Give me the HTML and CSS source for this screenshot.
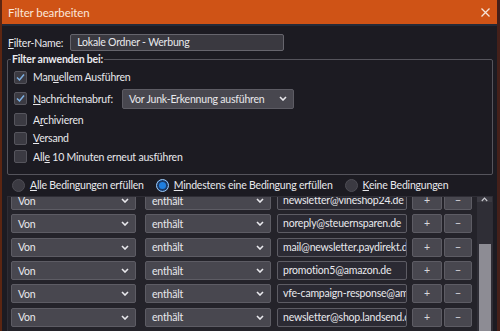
FILE: index.html
```html
<!DOCTYPE html>
<html lang="de">
<head>
  <meta charset="UTF-8">
  <title>Filter bearbeiten</title>
  <link rel="stylesheet" href="styles.css">
</head>
<body>
  <div class="window">
    <div class="titlebar">
      <span class="title">Filter bearbeiten</span>
      <svg class="close" width="9" height="9" viewBox="0 0 9 9"><path d="M0.5 0.5 L8.5 8.5 M8.5 0.5 L0.5 8.5" stroke="#f6e4d8" stroke-width="1.3"/></svg>
    </div>

    <div class="content">
      <div class="name-row">
        <label><u>F</u>ilter-Name:</label>
        <div class="name-input">Lokale Ordner - Werbung</div>
      </div>

      <fieldset class="apply">
        <legend>Filter anwenden bei:</legend>
        <div class="check-row">
          <span class="box checked"><svg width="11" height="11" viewBox="0 0 11 11"><path d="M2 5.5 L4.5 8 L9 2.5" fill="none" stroke="#7fb2e5" stroke-width="1.5"/></svg></span>
          <span>Man<u>u</u>ellem Ausführen</span>
        </div>
        <div class="check-row tall">
          <span class="box checked"><svg width="11" height="11" viewBox="0 0 11 11"><path d="M2 5.5 L4.5 8 L9 2.5" fill="none" stroke="#7fb2e5" stroke-width="1.5"/></svg></span>
          <span class="fetch-label"><u>N</u>achrichtenabruf:</span>
          <div class="select junk">
            <span>Vor Junk-Erkennung ausführen</span>
            <svg width="8" height="5" viewBox="0 0 8 5"><path d="M1 1 L4 4 L7 1" fill="none" stroke="#e8e8ec" stroke-width="1.6"/></svg>
          </div>
        </div>
        <div class="check-row">
          <span class="box"></span>
          <span>A<u>r</u>chivieren</span>
        </div>
        <div class="check-row">
          <span class="box"></span>
          <span><u>V</u>ersand</span>
        </div>
        <div class="check-row">
          <span class="box"></span>
          <span>All<u>e</u> 10 Minuten erneut ausführen</span>
        </div>
      </fieldset>

      <div class="radios">
        <div class="radio-item"><span class="radio"></span><span><u>A</u>lle Bedingungen erfüllen</span></div>
        <div class="radio-item"><span class="radio on"></span><span><u>M</u>indestens eine Bedingung erfüllen</span></div>
        <div class="radio-item"><span class="radio"></span><span><u>K</u>eine Bedingungen</span></div>
      </div>

      <div class="rules">
        <div class="rule-list" id="rule-list"></div>
        <div class="scrollbar">
          <div class="scroll-up"><svg width="7" height="5" viewBox="0 0 7 5"><path d="M0.8 4 L3.5 1.2 L6.2 4" fill="none" stroke="#c9c9cf" stroke-width="1.2"/></svg></div>
          <div class="scroll-track"><div class="thumb"></div></div>
        </div>
      </div>
    </div>
  </div>

  <script>
    var addresses = [
      'newsletter@vineshop24.de',
      'noreply@steuernsparen.de',
      'mail@newsletter.paydirekt.de',
      'promotion5@amazon.de',
      'vfe-campaign-response@amazon.de',
      'newsletter@shop.landsend.de',
      'info@newsletter.zalando.de'
    ];

    var chevron = '<svg width="8" height="5" viewBox="0 0 8 5"><path d="M1 1 L4 4 L7 1" fill="none" stroke="#e8e8ec" stroke-width="1.6"/></svg>';
    var list = document.getElementById('rule-list');

    addresses.forEach(function (addr) {
      var row = document.createElement('div');
      row.className = 'rule-row';
      row.innerHTML =
        '<div class="select field"><span>Von</span>' + chevron + '</div>' +
        '<div class="select op"><span>enthält</span>' + chevron + '</div>' +
        '<div class="value">' + addr + '</div>' +
        '<div class="btn plus">+</div>' +
        '<div class="btn minus">&minus;</div>';
      list.appendChild(row);
    });
  </script>
</body>
</html>
```

FILE: styles.css
```css
body {
  margin: 0;
  background-color: #1c1b22;
  color: #e9e9ed;
  font-family: 'Lato', 'Liberation Sans', sans-serif;
  font-size: 10.5px;
  letter-spacing: -0.2px;
}
.window {
  height: 331px;
  display: flex;
  flex-direction: column;
  border-left: 2px solid #5c2612;
  border-right: 3px solid #45201a;
  overflow: hidden;
}
.titlebar {
  height: 24px;
  flex: none;
  display: flex;
  align-items: center;
  justify-content: space-between;
  padding: 0 7px 0 6px;
  background-color: #cf5316;
  color: #fbe7da;
  font-size: 11.5px;
  letter-spacing: -0.1px;
}
.content {
  flex: 1;
  border-top: 2px solid #232a38;
  padding: 8px 4px 0 5px;
  overflow: hidden;
  white-space: nowrap;
}
.name-row {
  display: flex;
  align-items: center;
  gap: 7px;
  padding-left: 1px;
}
.name-input {
  width: 214px;
  height: 17px;
  box-sizing: border-box;
  line-height: 15px;
  padding: 0 6px;
  background-color: #3a3940;
  border: 1px solid #66656d;
  border-radius: 2px;
}
.apply {
  margin: 2px 0 0 0;
  padding: 3px 6px 8px 6px;
  border: 1px solid #55545c;
  border-radius: 2px;
}
.apply legend {
  padding: 0 1px;
  margin-left: -3px;
  font-weight: bold;
}
.check-row {
  height: 18.5px;
  display: flex;
  align-items: center;
  gap: 6px;
}
.check-row.tall {
  height: 24px;
}
.box {
  width: 11px;
  height: 11px;
  flex: none;
  display: flex;
  background-color: #3b3a42;
  border: 1px solid #56555d;
  border-radius: 2px;
}
.fetch-label {
  margin-right: 3px;
}
.select {
  display: flex;
  align-items: center;
  justify-content: space-between;
  background-color: #48474f;
  border: 1px solid #5d5c64;
  border-radius: 2px;
  box-sizing: border-box;
  padding: 0 6px 0 6px;
}
.select.junk {
  width: 172px;
  height: 20px;
}
.radios {
  display: flex;
  align-items: center;
  height: 20px;
  margin-top: 0;
  padding-left: 5px;
}
.radio-item {
  display: flex;
  align-items: center;
  gap: 5px;
  margin-right: 12px;
}
.radio {
  width: 11px;
  height: 11px;
  border-radius: 50%;
  background-color: #3b3a42;
  border: 1px solid #4e4d55;
}
.radio.on {
  background-color: #1f7fe0;
  border-color: #9cc4ee;
  box-shadow: inset 0 0 0 2px #1c3a66;
}
.rules {
  margin-top: 1px;
  height: 140px;
  display: flex;
  border: 1px solid #2e2d35;
  background-color: #24232a;
  overflow: hidden;
}
.rule-list {
  flex: 1;
  margin-top: -6px;
  padding-left: 3px;
}
.rule-row {
  display: flex;
  height: 19px;
  margin-bottom: 4.35px;
}
.rule-row .select {
  height: 19px;
}
.select.field {
  width: 125px;
  margin-right: 9px;
}
.select.op {
  width: 126px;
  margin-right: 6px;
}
.value {
  width: 130px;
  box-sizing: border-box;
  height: 19px;
  line-height: 17px;
  padding: 0 5px;
  background-color: #2b2a33;
  border: 1px solid #5d5c64;
  border-radius: 2px;
  overflow: hidden;
  margin-right: 5px;
}
.btn {
  height: 19px;
  box-sizing: border-box;
  line-height: 17px;
  text-align: center;
  background-color: #48474f;
  border: 1px solid #5d5c64;
  border-radius: 2px;
  color: #d8d8dc;
}
.btn.plus {
  width: 30px;
  margin-right: 2px;
}
.btn.minus {
  width: 28px;
}
.scrollbar {
  width: 15px;
  margin-left: 4px;
  display: flex;
  flex-direction: column;
  background-color: #2f2e36;
}
.scroll-up {
  height: 14px;
  display: flex;
  align-items: center;
  justify-content: center;
  background-color: #3b3a42;
}
.scroll-track {
  flex: 1;
  padding: 42px 1px 0 2px;
}
.thumb {
  height: 100px;
  background-color: #8d8c94;
}
```
